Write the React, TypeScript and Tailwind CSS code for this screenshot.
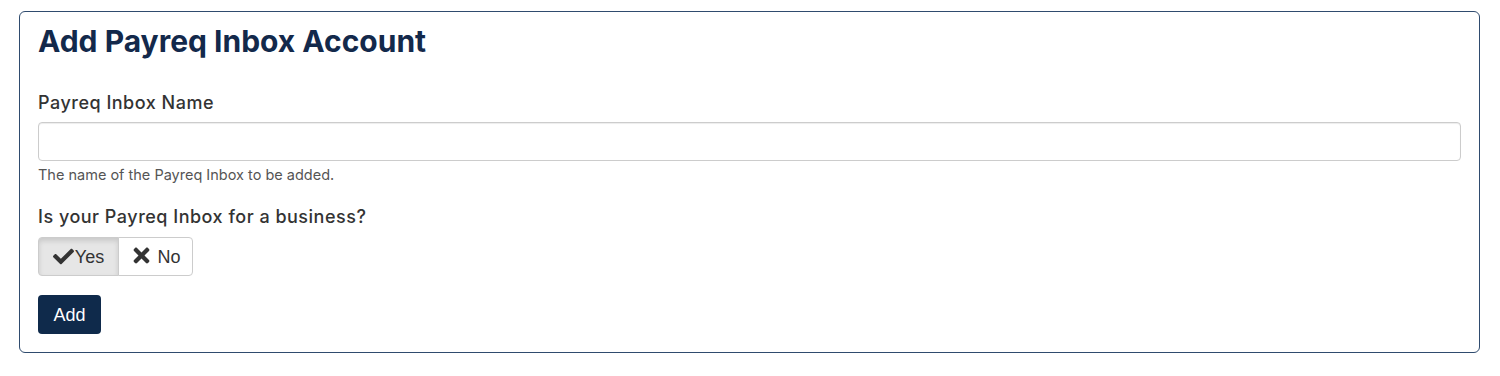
import React, { useState } from 'react'
import { FaCheck, FaTimes } from 'react-icons/fa'

// Add Payreq Inbox Account form card
export default function App() {
  const [name, setName] = useState('')
  const [business, setBusiness] = useState(true)

  return (
    <div className="bg-white min-h-[376px] pt-[11px] pl-[19px] pr-[20px]" style={{ fontFamily: 'Inter, "Noto Sans", sans-serif' }}>
      <div className="border border-[#2f4b6e] rounded-[6px] px-[18px] pt-[11px] pb-[18px]">
        <h1 className="text-[30px] leading-[36px] font-bold text-[#13294b]">
          Add Payreq Inbox Account
        </h1>

        <label className="block mt-[32px] text-[18px] leading-[24px] font-medium text-[#333] tracking-[0.5px]">
          Payreq Inbox Name
        </label>
        <input
          value={name}
          onChange={(e) => setName(e.target.value)}
          className="mt-[7px] block w-full h-[39px] rounded-[4px] border border-[#ccc] px-3 text-[15px] outline-none shadow-[inset_0_1px_1px_rgba(0,0,0,0.075)]"
        />
        <p className="mt-[4px] text-[14.5px] leading-[20px] text-[#555]">
          The name of the Payreq Inbox to be added.
        </p>

        <label className="block mt-[20px] text-[18px] leading-[24px] font-medium text-[#333] tracking-[0.5px]">
          Is your Payreq Inbox for a business?
        </label>
        <div className="mt-[8px] flex" style={{ fontFamily: '"Liberation Sans", Arial, sans-serif' }}>
          <button
            onClick={() => setBusiness(true)}
            className={`h-[39px] w-[81px] pt-[2px] flex items-center justify-center gap-[1px] border border-[#ccc] rounded-l-[4px] text-[18px] text-[#333] ${
              business ? 'bg-[#e6e6e6] border-[#adadad] shadow-[inset_0_3px_5px_rgba(0,0,0,0.125)]' : 'bg-white'
            }`}
          >
            <FaCheck size={21} className="-mt-[2px]" />
            Yes
          </button>
          <button
            onClick={() => setBusiness(false)}
            className={`h-[39px] w-[75px] pt-[2px] -ml-px flex items-center justify-center gap-[4px] border border-[#ccc] rounded-r-[4px] text-[18px] text-[#333] ${
              !business ? 'bg-[#e6e6e6] border-[#adadad] shadow-[inset_0_3px_5px_rgba(0,0,0,0.125)]' : 'bg-white'
            }`}
          >
            <FaTimes size={23} className="-mt-[4px]" />
            No
          </button>
        </div>

        <button
          className="mt-[19px] h-[39px] w-[63px] pt-[2px] rounded-[4px] bg-[#0f2a4b] text-white text-[18px] flex items-center justify-center"
          style={{ fontFamily: '"Liberation Sans", Arial, sans-serif' }}
        >
          Add
        </button>
      </div>
    </div>
  )
}
